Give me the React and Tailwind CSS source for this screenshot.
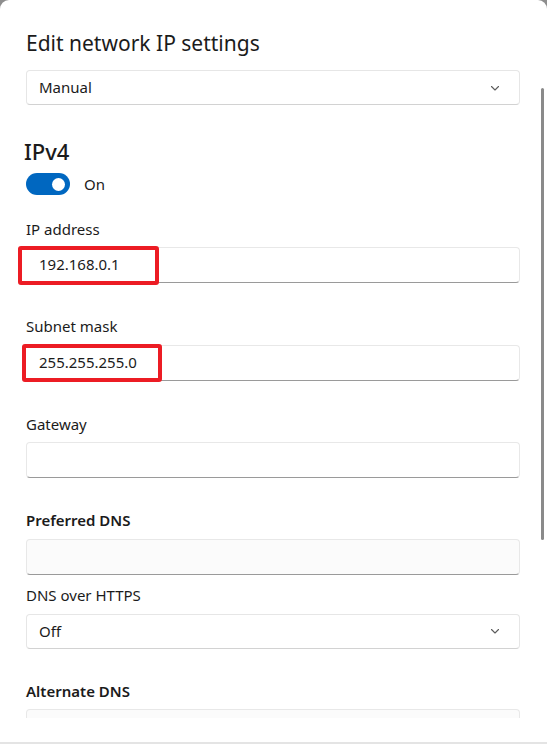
import React from "react";

function Chevron() {
  return (
    <svg width="12" height="12" viewBox="0 0 12 12" fill="none">
      <path d="M2.5 4.5 L6 8 L9.5 4.5" stroke="#5c5c5c" strokeWidth="1.1" strokeLinecap="round" strokeLinejoin="round" />
    </svg>
  );
}

function Select({ value }) {
  return (
    <div className="flex h-[35px] items-center justify-between rounded-[4px] border border-[#e6e6e6] border-b-[#d2d2d2] bg-white pl-[12px] pr-[18px]">
      <span className="text-[15px] text-[#1b1b1b]">{value}</span>
      <Chevron />
    </div>
  );
}

function TextBox({ value, bg = "bg-white", highlight }) {
  return (
    <div className={`relative flex h-[36px] items-center rounded-[4px] border border-[#e8e8e8] border-b-[#9a9a9a] ${bg} pl-[12px]`}>
      {highlight && (
        <div className={`absolute ${highlight} rounded-[3px] border-[4px] border-[#ec1c24] bg-white`} />
      )}
      <span className="relative text-[15px] text-[#1b1b1b]">{value}</span>
    </div>
  );
}

export default function App() {
  return (
    <div className="h-[744px] w-[547px] bg-[#8e8e8e]" style={{ fontFamily: '"Noto Sans", "Open Sans", sans-serif' }}>
      <div className="relative flex h-[744px] flex-col overflow-hidden rounded-t-[9px] border-b-[2px] border-[#e4e4e4] bg-white">
        <div className="h-[718px] overflow-hidden pl-[26px] pr-[27px] pt-[28px]">
          <h1 className="text-[21px] leading-[30px] text-[#1b1b1b]">Edit network IP settings</h1>
          <div className="mt-[12px]">
            <Select value="Manual" />
          </div>
          <h2 className="-ml-[2px] mt-[31px] text-[22px] font-medium leading-[30px] text-[#1b1b1b]">IPv4</h2>
          <div className="mt-[7px] flex items-center gap-[14px]">
            <div className="flex h-[22px] w-[44px] items-center justify-end rounded-full bg-[#0067c0] pr-[5px]">
              <div className="h-[13px] w-[13px] rounded-full bg-white" />
            </div>
            <span className="text-[15px] text-[#1b1b1b]">On</span>
          </div>

          <div className="mt-[23px] text-[15px] leading-[20px] text-[#1b1b1b]">IP address</div>
          <div className="mt-[8px]">
            <TextBox value="192.168.0.1" highlight="-left-[9px] -top-[2px] h-[39px] w-[141px]" />
          </div>

          <div className="mt-[33px] text-[15px] leading-[20px] text-[#1b1b1b]">Subnet mask</div>
          <div className="mt-[9px]">
            <TextBox value="255.255.255.0" highlight="-left-[5px] -top-[2px] h-[38px] w-[140px]" />
          </div>

          <div className="mt-[33px] text-[15px] leading-[20px] text-[#1b1b1b]">Gateway</div>
          <div className="mt-[8px]">
            <TextBox value="" />
          </div>

          <div className="mt-[32px] text-[15px] font-semibold leading-[20px] text-[#1b1b1b]">Preferred DNS</div>
          <div className="mt-[9px]">
            <TextBox value="" bg="bg-[#fbfbfb]" />
          </div>

          <div className="mt-[10px] text-[15px] leading-[20px] text-[#1b1b1b]">DNS over HTTPS</div>
          <div className="mt-[9px]">
            <Select value="Off" />
          </div>

          <div className="mt-[32px] text-[15px] font-semibold leading-[20px] text-[#1b1b1b]">Alternate DNS</div>
          <div className="mt-[8px]">
            <TextBox value="" bg="bg-[#fbfbfb]" />
          </div>
        </div>
        <div className="absolute left-[541px] top-[88px] h-[452px] w-[3px] rounded-full bg-[#8a8a8a]" />
      </div>
    </div>
  );
}
